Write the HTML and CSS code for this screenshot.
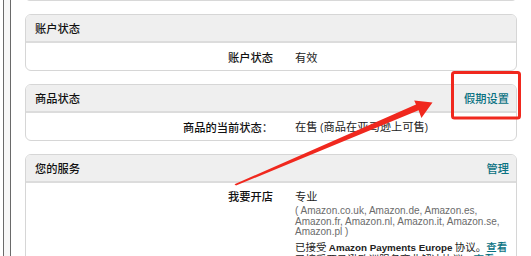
FILE: index.html
```html
<!DOCTYPE html>
<html lang="zh-CN">
<head>
<meta charset="utf-8">
<title>账户状态</title>
<link rel="stylesheet" href="styles.css">
</head>
<body>
<div class="shell">
  <div class="rail">
    <div class="main">
      <div class="panel-stub"></div>

      <section class="panel">
        <header class="panel-head"><h3>账户状态</h3></header>
        <div class="row">
          <div class="label">账户状态</div>
          <div class="value">有效</div>
        </div>
      </section>

      <section class="panel">
        <header class="panel-head"><h3>商品状态</h3><a class="link" href="#">假期设置</a></header>
        <div class="row">
          <div class="label">商品的当前状态：</div>
          <div class="value">在售 <span class="lat">(</span>商品在亚马逊上可售<span class="lat">)</span></div>
        </div>
      </section>

      <section class="panel">
        <header class="panel-head"><h3>您的服务</h3><a class="link" href="#">管理</a></header>
        <div class="row row-tall">
          <div class="label">我要开店</div>
          <div class="value">
            <div class="plan">专业</div>
            <div class="markets">( Amazon.co.uk, Amazon.de, Amazon.es, Amazon.fr, Amazon.nl, Amazon.it, Amazon.se, Amazon.pl )</div>
            <div class="agree">已接受 <b class="lat">Amazon Payments Europe</b> 协议。<a class="link" href="#">查看</a></div>
            <div class="agree">已接受亚马逊欧洲服务商业解决协议。<a class="link" href="#">查看</a></div>
          </div>
        </div>
      </section>
    </div>
  </div>

  <svg class="annot" width="531" height="256" viewBox="0 0 531 256" aria-hidden="true">
    <rect x="452.5" y="72.5" width="67" height="45.5" rx="2" fill="none" stroke="#f0281e" stroke-width="3"/>
    <polygon points="234.5,184.2 416,104.6 414.2,100.6 432.5,102.6 421.4,118 418.6,110.2 236,185.6" fill="#f0281e"/>
  </svg>
</div>
</body>
</html>
```

FILE: styles.css
```css
* { box-sizing: border-box; }

html, body {
  margin: 0;
  padding: 0;
  background: #fff;
}

body {
  font-family: "Noto Sans CJK SC", "Liberation Sans", sans-serif;
  font-size: 11.25px;
  color: #111;
}

.lat {
  font-family: "Liberation Sans", "Noto Sans CJK SC", sans-serif;
  font-size: 10px;
}

.shell {
  position: relative;
  width: 531px;
  height: 256px;
  overflow: hidden;
  display: flex;
}

.rail {
  flex: 1;
  display: flex;
  margin-left: 3px;
  padding-left: 6px;
  border-left: 1px solid #6a6a6a;
  background: #f7f7f7;
}

.main {
  flex: 1;
  background: #fff;
  border-left: 1px solid #6a6a6a;
  padding: 0 14px;
}

.panel-stub {
  height: 5px;
  margin-top: -4px;
  border: 1px solid #d8d8d8;
  border-top: none;
  border-radius: 0 0 6px 6px;
  margin-bottom: 13px;
}

.panel {
  border: 1px solid #d6d6d6;
  border-radius: 6px;
  margin-bottom: 13px;
  overflow: hidden;
}

.panel-head {
  display: flex;
  justify-content: space-between;
  align-items: center;
  height: 28px;
  padding: 0 7px 0 9px;
  background: #efefef;
  border-bottom: 2px solid #dcdcdc;
}

.panel-head h3 {
  margin: 0;
  font-size: 11.25px;
  font-weight: 500;
  line-height: 14px;
  color: #111;
}

.link {
  color: #0a7282;
  text-decoration: none;
  font-weight: 500;
}

.row {
  display: grid;
  grid-template-columns: 247px 1fr;
  column-gap: 22px;
  align-items: center;
  height: 27px;
  line-height: 14px;
  padding-right: 2px;
}

.row-tall {
  height: auto;
  align-items: start;
  padding-top: 6px;
}

.label {
  text-align: right;
  font-weight: 500;
  color: #111;
}

.value {
  color: #222;
  min-width: 0;
}

.plan {
  line-height: 14px;
}

.markets {
  margin-top: 3px;
  font-family: "Liberation Sans", sans-serif;
  font-size: 10px;
  line-height: 10.5px;
  color: #6b6b6b;
}

.agree {
  margin-top: 3px;
  font-size: 10.5px;
  line-height: 11.5px;
  color: #222;
  white-space: nowrap;
}

.agree + .agree {
  margin-top: 0;
}

.agree b {
  font-weight: 700;
  font-size: 9.8px;
}

.annot {
  position: absolute;
  left: 0;
  top: 0;
  pointer-events: none;
}
```
